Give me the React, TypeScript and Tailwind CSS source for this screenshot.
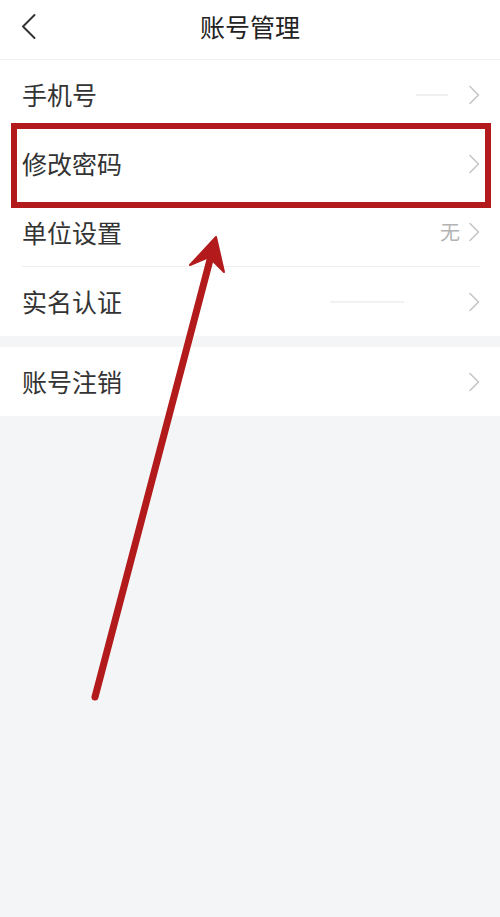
const font = { fontFamily: '"Noto Sans CJK SC", "Noto Sans", sans-serif' };

function Chevron() {
  return (
    <svg width="12" height="20" viewBox="0 0 12 20" fill="none" className="shrink-0">
      <path d="M2 1.5L10.5 10L2 18.5" stroke="#c6c6c6" strokeWidth="1.6" strokeLinecap="round" strokeLinejoin="round" />
    </svg>
  );
}

function Row({ label, extra, divider }: { label: string; extra?: React.ReactNode; divider?: boolean }) {
  return (
    <div className="bg-white pl-[22px] pr-[20px]">
      <div className={`flex h-[69px] items-center ${divider ? "border-b border-[#efefef]" : ""}`}>
        <span className="flex-1 text-[25px] leading-none text-[#333]">{label}</span>
        {extra}
        <Chevron />
      </div>
    </div>
  );
}

export default function App() {
  return (
    <div className="relative min-h-[917px] w-[500px] overflow-hidden bg-[#f4f5f7]" style={font}>
      <header className="relative flex h-[60px] items-center justify-center border-b border-[#efefef] bg-white pb-[6px]">
        <svg className="absolute left-[20px] top-[13px]" width="18" height="27" viewBox="0 0 18 27" fill="none">
          <path d="M14.5 2L3 13.5L14.5 25" stroke="#333" strokeWidth="2" strokeLinecap="round" strokeLinejoin="round" />
        </svg>
        <h1 className="text-[25px] leading-none text-[#222]">账号管理</h1>
      </header>

      <div>
        <Row label="手机号" extra={<span className="mr-[20px] h-[2px] w-[32px] bg-[#f0f0f0]" />} />
        <Row label="修改密码" />
        <Row label="单位设置" divider extra={<span className="mr-[8px] text-[20px] leading-none text-[#b3b3b3]">无</span>} />
        <Row label="实名认证" extra={<span className="mr-[64px] h-[2px] w-[74px] bg-[#f2f2f2]" />} />
      </div>

      <div className="mt-[11px]">
        <Row label="账号注销" />
      </div>

      {/* annotation: red frame */}
      <div className="pointer-events-none absolute left-[11px] top-[123px] h-[85px] w-[480px] border-[6px] border-[#b21a1c]" />

      {/* annotation: arrow */}
      <svg className="pointer-events-none absolute left-0 top-0" width="500" height="917" viewBox="0 0 500 917">
        <line x1="95" y1="697" x2="211" y2="256" stroke="#b21a1c" strokeWidth="7" strokeLinecap="round" />
        <polygon points="216,237 190,265 209,257 224,272" fill="#b21a1c" stroke="#b21a1c" strokeWidth="2" strokeLinejoin="round" />
      </svg>
    </div>
  );
}
